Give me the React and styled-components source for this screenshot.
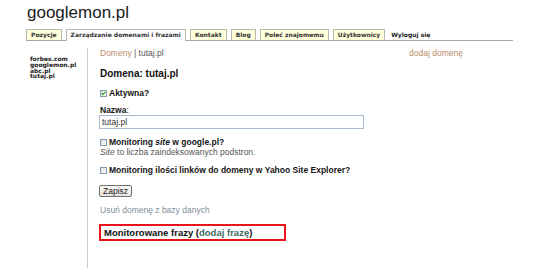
import React from "react";
import styled, { createGlobalStyle } from "styled-components";

const Global = createGlobalStyle`
  html, body { margin: 0; padding: 0; background: #fff; }
  body { font-family: "Liberation Sans", Arial, sans-serif; color: #1e1e1e; }
`;

const Page = styled.div`
  padding: 0 27px;
  width: 540px;
  box-sizing: border-box;
`;

const Title = styled.h1`
  margin: 3px 0 0;
  font-size: 17px;
  font-weight: normal;
  line-height: 20px;
  color: #1a1a1a;
`;

const Tabs = styled.nav`
  display: flex;
  align-items: flex-end;
  gap: 4px;
  margin: 6px 0 0 -1px;
  border-bottom: 1px solid #a8a8a8;
  font-family: "DejaVu Sans", Verdana, sans-serif;
  font-weight: bold;
  font-size: 6px;
  line-height: 8px;
`;

const Tab = styled.span`
  display: block;
  padding: 1px 4px ${(p) => (p.$active ? "2px" : "1px")};
  margin-bottom: ${(p) => (p.$active ? "-1px" : "0")};
  border: 1px solid #b9b9aa;
  border-bottom: none;
  background: ${(p) => (p.$active ? "#fff" : "#ffffdc")};
  color: #333;
  white-space: nowrap;
`;

const Logout = styled.span`
  display: block;
  padding: 1px 4px 1px 2px;
  color: #222;
  white-space: nowrap;
`;

const Body = styled.div`
  display: flex;
  margin-top: 7px;
`;

const Sidebar = styled.ul`
  list-style: none;
  margin: 0;
  width: 60px;
  box-sizing: border-box;
  padding: 8px 0 0 3px;
  font-family: "DejaVu Sans", Verdana, sans-serif;
  font-weight: bold;
  font-size: 6px;
  line-height: 5.8px;
  color: #1a1a1a;
`;

const Main = styled.main`
  flex: 1;
  border-left: 1px solid #cccccc;
  padding: 0 0 27px 12px;
  font-size: 8.5px;
  line-height: 10px;
`;

const Crumbs = styled.div`
  display: flex;
  justify-content: space-between;
  width: 363px;
  color: #555;
`;

const TanLink = styled.a`
  color: #b98d6c;
  text-decoration: none;
`;

const Heading = styled.h2`
  margin: 10px 0 0;
  font-size: 10px;
  line-height: 12px;
  font-weight: bold;
  color: #111;
`;

const CheckRow = styled.div`
  display: flex;
  align-items: center;
  gap: 2px;
  margin-top: ${(p) => p.$mt}px;
  font-weight: bold;
  color: #151515;
`;

const Box = styled.span`
  display: inline-flex;
  align-items: center;
  justify-content: center;
  flex: none;
  width: 7px;
  height: 7px;
  box-sizing: border-box;
  border: 1px solid #7f9db9;
  background: linear-gradient(135deg, #dcdcd7, #ffffff);
  margin-top: 1px;
`;

const Label = styled.div`
  margin-top: 8px;
  line-height: 9px;
  color: #151515;
`;

const Input = styled.input`
  display: block;
  width: 265px;
  height: 14px;
  box-sizing: border-box;
  margin: 0 0 0 -1px;
  padding: 0 2px;
  border: 1px solid #a9bccf;
  font-family: "Liberation Sans", Arial, sans-serif;
  font-size: 8.5px;
  color: #333;
  outline: none;
`;

const Hint = styled.div`
  color: #555;
`;

const Button = styled.button`
  display: block;
  margin: 10px 0 0 -1px;
  height: 12px;
  padding: 0 3px;
  border: 1px solid #707070;
  border-radius: 2px;
  background: linear-gradient(#fbfbf9, #e4e3dc);
  font-family: "Liberation Sans", Arial, sans-serif;
  font-size: 8.5px;
  line-height: 10px;
  color: #222;
`;

const Remove = styled.a`
  display: block;
  margin-top: 8px;
  color: #7f8e9a;
  text-decoration: none;
`;

const Phrases = styled.div`
  margin: 9px 0 0 -1px;
  width: 187px;
  height: 17px;
  box-sizing: border-box;
  border: 2px solid #e8141c;
  padding: 0 3px;
  font-size: 9.5px;
  line-height: 13px;
  font-weight: bold;
  color: #111;
`;

const GreenLink = styled.a`
  color: #3d6b5e;
  text-decoration: none;
`;

function Check({ checked }) {
  return (
    <Box>
      {checked && (
        <svg width="5" height="5" viewBox="0 0 5 5">
          <path d="M0.6 2.4 L1.9 3.7 L4.4 0.9" fill="none" stroke="#21a121" strokeWidth="1.2" />
        </svg>
      )}
    </Box>
  );
}

export default function App() {
  return (
    <>
      <Global />
      <Page>
        <Title>googlemon.pl</Title>
        <Tabs>
          <Tab>Pozycje</Tab>
          <Tab $active>Zarządzanie domenami i frazami</Tab>
          <Tab>Kontakt</Tab>
          <Tab>Blog</Tab>
          <Tab>Poleć znajomemu</Tab>
          <Tab>Użytkownicy</Tab>
          <Logout>Wyloguj się</Logout>
        </Tabs>
        <Body>
          <Sidebar>
            <li>forbes.com</li>
            <li>googlemon.pl</li>
            <li>abc.pl</li>
            <li>tutaj.pl</li>
          </Sidebar>
          <Main>
            <Crumbs>
              <span>
                <TanLink href="#">Domeny</TanLink> | tutaj.pl
              </span>
              <TanLink href="#">dodaj domenę</TanLink>
            </Crumbs>
            <Heading>Domena: tutaj.pl</Heading>
            <CheckRow $mt={8}>
              <Check checked />
              <span>Aktywna?</span>
            </CheckRow>
            <Label>
              <b>Nazwa</b>:
            </Label>
            <Input defaultValue="tutaj.pl" />
            <CheckRow $mt={8}>
              <Check />
              <span>
                Monitoring <i>site</i> w google.pl?
              </span>
            </CheckRow>
            <Hint>
              <i>Site</i> to liczba zaindeksowanych podstron.
            </Hint>
            <CheckRow $mt={8}>
              <Check />
              <span>Monitoring ilości linków do domeny w Yahoo Site Explorer?</span>
            </CheckRow>
            <Button>Zapisz</Button>
            <Remove href="#">Usuń domenę z bazy danych</Remove>
            <Phrases>
              Monitorowane frazy (<GreenLink href="#">dodaj frazę</GreenLink>)
            </Phrases>
          </Main>
        </Body>
      </Page>
    </>
  );
}
